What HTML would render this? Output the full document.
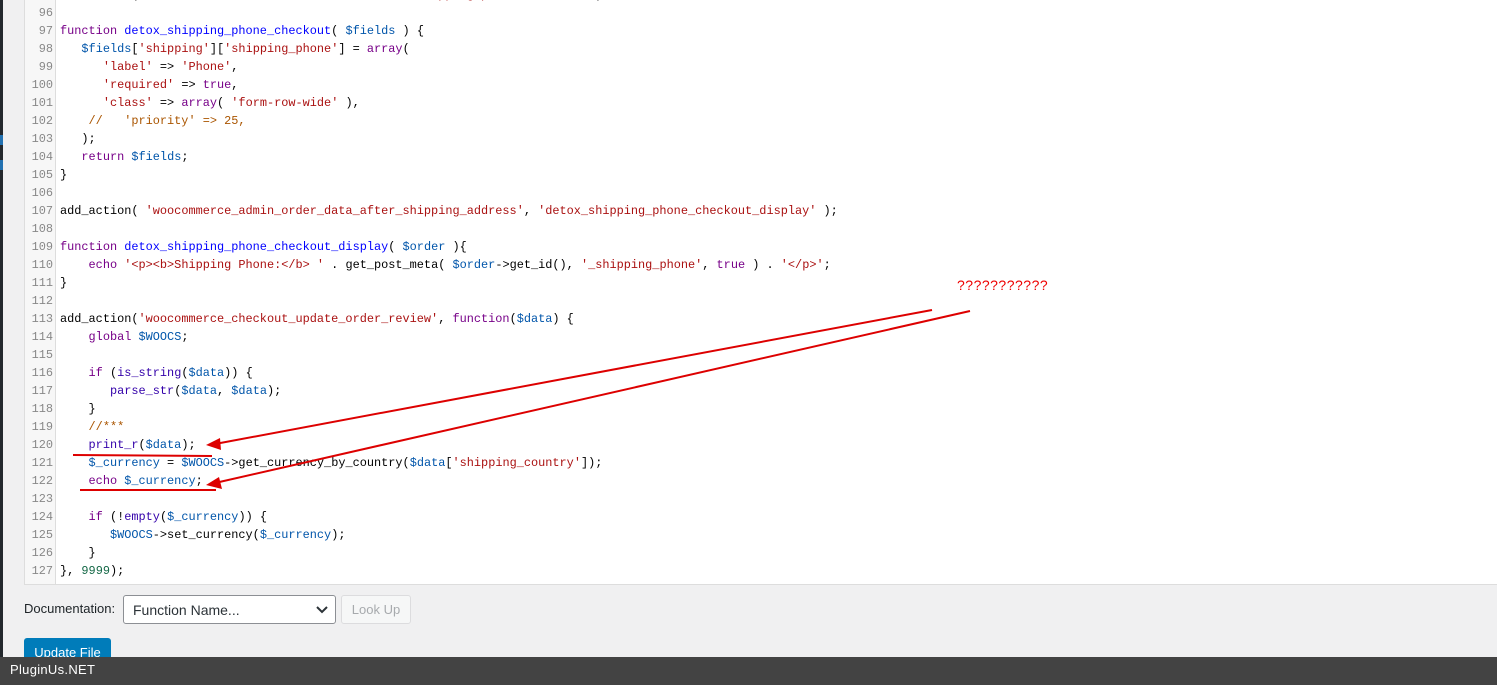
<!DOCTYPE html>
<html><head><meta charset="utf-8"><style>
*{margin:0;padding:0;box-sizing:border-box}
body{width:1497px;height:685px;overflow:hidden;background:#f0f0f1;position:relative;font-family:"Liberation Sans",sans-serif}
.strip{position:absolute;left:0;top:0;width:3px;height:685px;background:#23282d}
.ed{position:absolute;left:24px;top:-10px;width:1480px;height:595px;background:#fff;border:1px solid #ddd}
.gut{position:absolute;left:24px;top:-10px;width:32px;height:594px;background:#f7f7f7;border-right:1px solid #ddd;border-left:1px solid #ddd}
.ln{position:absolute;left:24px;width:29px;text-align:right;font:11.9px "Liberation Mono",monospace;color:#888;line-height:18px;white-space:pre}
.cd{position:absolute;left:60px;font:11.9px "Liberation Mono",monospace;color:#000;line-height:18px;white-space:pre}
.k{color:#708}.d{color:#00f}.v{color:#05a}.s{color:#a11}.c{color:#a50}.n{color:#164}.b{color:#30a}
.lab{position:absolute;left:24px;top:601px;font-size:13px;color:#1d2327}
.sel{position:absolute;left:123px;top:595px;width:213px;height:29px;background:#fff;border:1px solid #8c8f94;border-radius:3px;font-size:14px;color:#2c3338;padding:6px 9px}
.lk{position:absolute;left:341px;top:595px;width:70px;height:29px;background:#f6f7f7;border:1px solid #dcdcde;border-radius:3px;font-size:13px;color:#a7aaad;text-align:center;line-height:27px}
.up{position:absolute;left:24px;top:638px;width:87px;height:30px;background:#007cba;border-radius:3px;color:#fff;font-size:13px;text-align:center;line-height:30px}
.foot{position:absolute;left:0;top:657px;width:1497px;height:28px;background:#434343;color:#fff;font-size:13px;padding:5px 10px;letter-spacing:.3px}
</style></head><body>
<div class="strip"></div>
<div style="position:absolute;left:0;top:135px;width:3px;height:10px;background:#2271b1"></div>
<div style="position:absolute;left:0;top:160px;width:3px;height:10px;background:#2271b1"></div>
<div class="ed"></div><div class="gut"></div>
<div class="ln" style="top:-14px">95
96
97
98
99
100
101
102
103
104
105
106
107
108
109
110
111
112
113
114
115
116
117
118
119
120
121
122
123
124
125
126
127</div>
<div class="cd" style="top:-14px">add_action( <span class="s">'woocommerce_checkout_fields'</span>, <span class="s">'detox_shipping_phone_checkout'</span> );

<span class="k">function</span> <span class="d">detox_shipping_phone_checkout</span>( <span class="v">$fields</span> ) {
   <span class="v">$fields</span>[<span class="s">'shipping'</span>][<span class="s">'shipping_phone'</span>] = <span class="k">array</span>(
      <span class="s">'label'</span> =&gt; <span class="s">'Phone'</span>,
      <span class="s">'required'</span> =&gt; <span class="k">true</span>,
      <span class="s">'class'</span> =&gt; <span class="k">array</span>( <span class="s">'form-row-wide'</span> ),
    <span class="c">//   'priority' =&gt; 25,</span>
   );
   <span class="k">return</span> <span class="v">$fields</span>;
}

add_action( <span class="s">'woocommerce_admin_order_data_after_shipping_address'</span>, <span class="s">'detox_shipping_phone_checkout_display'</span> );

<span class="k">function</span> <span class="d">detox_shipping_phone_checkout_display</span>( <span class="v">$order</span> ){
    <span class="k">echo</span> <span class="s">'&lt;p&gt;&lt;b&gt;Shipping Phone:&lt;/b&gt; '</span> . get_post_meta( <span class="v">$order</span>-&gt;get_id(), <span class="s">'_shipping_phone'</span>, <span class="k">true</span> ) . <span class="s">'&lt;/p&gt;'</span>;
}

add_action(<span class="s">'woocommerce_checkout_update_order_review'</span>, <span class="k">function</span>(<span class="v">$data</span>) {
    <span class="k">global</span> <span class="v">$WOOCS</span>;

    <span class="k">if</span> (<span class="b">is_string</span>(<span class="v">$data</span>)) {
       <span class="b">parse_str</span>(<span class="v">$data</span>, <span class="v">$data</span>);
    }
    <span class="c">//***</span>
    <span class="b">print_r</span>(<span class="v">$data</span>);
    <span class="v">$_currency</span> = <span class="v">$WOOCS</span>-&gt;get_currency_by_country(<span class="v">$data</span>[<span class="s">'shipping_country'</span>]);
    <span class="k">echo</span> <span class="v">$_currency</span>;

    <span class="k">if</span> (!<span class="b">empty</span>(<span class="v">$_currency</span>)) {
       <span class="v">$WOOCS</span>-&gt;set_currency(<span class="v">$_currency</span>);
    }
}, <span class="n">9999</span>);</div>
<div style="position:absolute;left:957px;top:277px;color:#e00;font-size:14px;letter-spacing:.5px">???????????</div>
<svg style="position:absolute;left:0;top:0" width="1497" height="685">
<g stroke="#d00" stroke-width="2" fill="none">
<line x1="932" y1="310" x2="215" y2="444"/>
<line x1="970" y1="311" x2="215" y2="483"/>
<line x1="73" y1="455" x2="212" y2="456"/>
<line x1="80" y1="490" x2="216" y2="490"/>
</g>
<polygon points="206,445 220,438 221,450" fill="#d00"/>
<polygon points="206,485 219,477 222,489" fill="#d00"/>
</svg>
<div class="lab">Documentation:</div>
<div class="sel">Function Name...<svg style="position:absolute;right:7px;top:10px" width="12" height="8"><path d="M1 1l5 5 5-5" stroke="#2c3338" stroke-width="2" fill="none"/></svg></div>
<div class="lk">Look Up</div>
<div class="up">Update File</div>
<div class="foot">PluginUs.NET</div>
</body></html>
